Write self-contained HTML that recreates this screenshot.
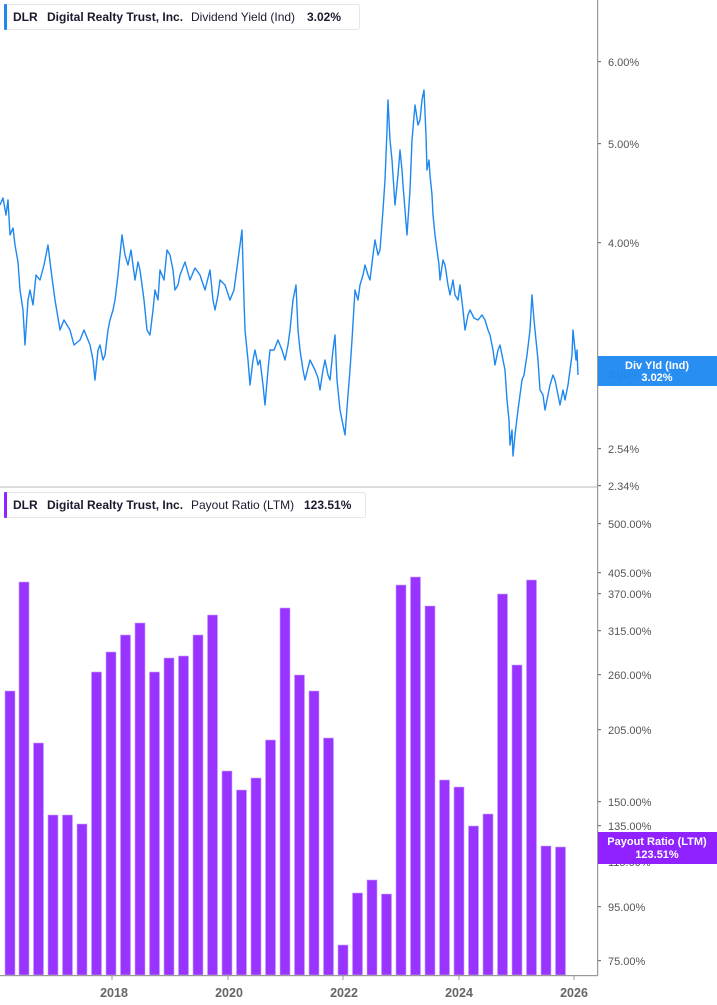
<!DOCTYPE html>
<html><head><meta charset="utf-8"><style>
html,body{margin:0;padding:0;background:#fff;}
svg{display:block;font-family:"Liberation Sans",Arial,sans-serif;}
</style></head><body>
<svg width="717" height="1005" viewBox="0 0 717 1005" xmlns="http://www.w3.org/2000/svg">
<rect width="717" height="1005" fill="#fff"/>
<rect x="0" y="486" width="598" height="2" fill="#dcdcdc"/>
<rect x="597" y="0" width="1.2" height="976" fill="#999"/>
<polyline fill="none" stroke="#1e88f0" stroke-width="1.4" stroke-linejoin="round" points="0,205 3,198 6,215 8,200 10,235 13,228 15,245 18,262 20,290 23,310 25,345 28,300 30,290 33,305 36,275 40,280 44,265 48,245 51,270 55,300 58,318 60,330 64,320 70,330 74,345 80,340 84,330 90,345 93,360 95,380 98,350 100,345 103,360 105,355 108,330 110,320 113,310 115,300 118,275 122,235 125,255 128,265 131,250 135,280 138,262 140,270 144,300 147,330 150,335 153,310 155,290 158,300 160,270 164,280 167,250 170,255 173,270 175,290 178,285 180,275 185,262 190,280 195,268 200,275 205,290 210,270 213,300 215,310 218,295 220,280 225,285 230,300 234,290 238,260 240,245 242,230 244,300 245,330 248,360 250,385 253,360 255,350 258,365 260,360 263,385 265,405 268,370 270,350 274,350 278,340 282,350 285,360 288,345 290,330 293,300 296,285 298,330 300,350 303,370 305,380 310,360 315,370 318,378 320,390 323,370 325,360 328,375 330,380 333,350 335,335 337,380 340,410 343,425 345,435 348,395 350,370 352,340 355,290 358,300 360,285 363,275 365,265 368,275 370,280 373,255 375,240 378,255 380,250 383,210 385,180 387,130 388,100 390,140 392,160 394,190 395,205 398,175 400,150 402,170 403,185 405,210 407,235 409,205 410,190 412,140 415,105 418,125 420,120 422,100 424,90 426,135 427,170 429,160 430,175 432,195 433,215 435,235 437,250 439,265 440,280 443,260 445,265 448,285 450,295 453,280 455,295 458,300 460,285 463,310 465,330 468,315 470,310 474,318 478,320 482,315 485,320 488,330 490,335 493,350 495,365 498,350 500,345 503,360 505,370 507,400 509,420 510,445 512,430 513,456 515,435 518,410 520,395 522,380 524,375 527,355 530,330 532,295 534,320 536,340 538,360 540,390 543,395 545,410 548,395 550,385 553,375 555,380 558,395 560,405 563,390 565,400 568,385 570,370 572,355 573,330 575,350 576,360 577,350 578,375"/>
<g fill="#9933ff" stroke="#c9a3ff" stroke-width="0.6">
<rect x="5" y="691" width="10" height="284"/>
<rect x="19" y="582" width="10" height="393"/>
<rect x="33.5" y="743" width="10" height="232"/>
<rect x="48" y="815" width="10" height="160"/>
<rect x="62.5" y="815" width="10" height="160"/>
<rect x="77" y="824" width="10" height="151"/>
<rect x="91.5" y="672" width="10" height="303"/>
<rect x="106" y="652" width="10" height="323"/>
<rect x="120.5" y="635" width="10" height="340"/>
<rect x="135" y="623" width="10" height="352"/>
<rect x="149.5" y="672" width="10" height="303"/>
<rect x="164" y="658" width="10" height="317"/>
<rect x="178.5" y="656" width="10" height="319"/>
<rect x="193" y="635" width="10" height="340"/>
<rect x="207.5" y="615" width="10" height="360"/>
<rect x="222" y="771" width="10" height="204"/>
<rect x="236.5" y="790" width="10" height="185"/>
<rect x="251" y="778" width="10" height="197"/>
<rect x="265.5" y="740" width="10" height="235"/>
<rect x="280" y="608" width="10" height="367"/>
<rect x="294.5" y="675" width="10" height="300"/>
<rect x="309" y="691" width="10" height="284"/>
<rect x="323.5" y="738" width="10" height="237"/>
<rect x="338" y="945" width="10" height="30"/>
<rect x="352.5" y="893" width="10" height="82"/>
<rect x="367" y="880" width="10" height="95"/>
<rect x="381.5" y="894" width="10" height="81"/>
<rect x="396" y="585" width="10" height="390"/>
<rect x="410.5" y="577" width="10" height="398"/>
<rect x="425" y="606" width="10" height="369"/>
<rect x="439.5" y="780" width="10" height="195"/>
<rect x="454" y="787" width="10" height="188"/>
<rect x="468.5" y="826" width="10" height="149"/>
<rect x="483" y="814" width="10" height="161"/>
<rect x="497.5" y="594" width="10" height="381"/>
<rect x="512" y="665" width="10" height="310"/>
<rect x="526.5" y="580" width="10" height="395"/>
<rect x="541" y="846" width="10" height="129"/>
<rect x="555.5" y="847" width="10" height="128"/>
</g>
<rect x="0" y="975" width="598" height="1.2" fill="#999"/>
<g stroke="#999" stroke-width="1"><line x1="112" y1="975" x2="112" y2="980"/><line x1="228" y1="975" x2="228" y2="980"/><line x1="343" y1="975" x2="343" y2="980"/><line x1="459" y1="975" x2="459" y2="980"/><line x1="574" y1="975" x2="574" y2="980"/></g>
<g font-size="12.5" font-weight="bold" fill="#666" text-anchor="middle">
<text x="114" y="997">2018</text><text x="229" y="997">2020</text><text x="344" y="997">2022</text><text x="459" y="997">2024</text><text x="574" y="997">2026</text></g>
<g font-size="11" fill="#555">
<text x="608" y="66">6.00%</text><text x="608" y="148">5.00%</text><text x="608" y="247">4.00%</text><text x="608" y="378">3.00%</text><text x="608" y="453">2.54%</text><text x="608" y="490">2.34%</text>
<text x="608" y="528">500.00%</text><text x="608" y="577">405.00%</text><text x="608" y="598">370.00%</text><text x="608" y="635">315.00%</text><text x="608" y="679">260.00%</text><text x="608" y="734">205.00%</text><text x="608" y="806">150.00%</text><text x="608" y="830">135.00%</text><text x="608" y="866">115.00%</text><text x="608" y="911">95.00%</text><text x="608" y="965">75.00%</text>
</g>
<g fill="#777"><rect x="598" y="61" width="3" height="1.2"/><rect x="598" y="143" width="3" height="1.2"/><rect x="598" y="242" width="3" height="1.2"/><rect x="598" y="448" width="3" height="1.2"/><rect x="598" y="485" width="3" height="1.2"/><rect x="598" y="523" width="3" height="1.2"/><rect x="598" y="572" width="3" height="1.2"/><rect x="598" y="593" width="3" height="1.2"/><rect x="598" y="630" width="3" height="1.2"/><rect x="598" y="674" width="3" height="1.2"/><rect x="598" y="729" width="3" height="1.2"/><rect x="598" y="801" width="3" height="1.2"/><rect x="598" y="825" width="3" height="1.2"/><rect x="598" y="861" width="3" height="1.2"/><rect x="598" y="906" width="3" height="1.2"/><rect x="598" y="960" width="3" height="1.2"/></g>
<rect x="598" y="356" width="119" height="30" fill="#1e88f0" fill-opacity="0.95"/>
<text x="657" y="369" font-size="11" font-weight="bold" fill="#fff" text-anchor="middle">Div Yld (Ind)</text>
<text x="657" y="381" font-size="11" font-weight="bold" fill="#fff" text-anchor="middle">3.02%</text>
<rect x="598" y="832" width="119" height="32" fill="#8f22ff"/>
<text x="657" y="845" font-size="11" font-weight="bold" fill="#fff" text-anchor="middle">Payout Ratio (LTM)</text>
<text x="657" y="858" font-size="11" font-weight="bold" fill="#fff" text-anchor="middle">123.51%</text>
<rect x="4.5" y="4.5" width="355" height="25" rx="2" fill="#fff" stroke="#e6e6e6"/>
<rect x="4" y="4" width="3" height="26" rx="1" fill="#1e88f0"/>
<g font-size="12" fill="#1a1a2e"><text x="13" y="21" font-weight="bold">DLR</text><text x="47" y="21" font-weight="bold">Digital Realty Trust, Inc.</text><text x="191" y="21">Dividend Yield (Ind)</text><text x="307" y="21" font-weight="bold">3.02%</text></g>
<rect x="4.5" y="492.5" width="361" height="25" rx="2" fill="#fff" stroke="#e6e6e6"/>
<rect x="4" y="492" width="3" height="26" rx="1" fill="#8f22ff"/>
<g font-size="12" fill="#1a1a2e"><text x="13" y="509" font-weight="bold">DLR</text><text x="47" y="509" font-weight="bold">Digital Realty Trust, Inc.</text><text x="191" y="509">Payout Ratio (LTM)</text><text x="304" y="509" font-weight="bold">123.51%</text></g>
</svg>
</body></html>
